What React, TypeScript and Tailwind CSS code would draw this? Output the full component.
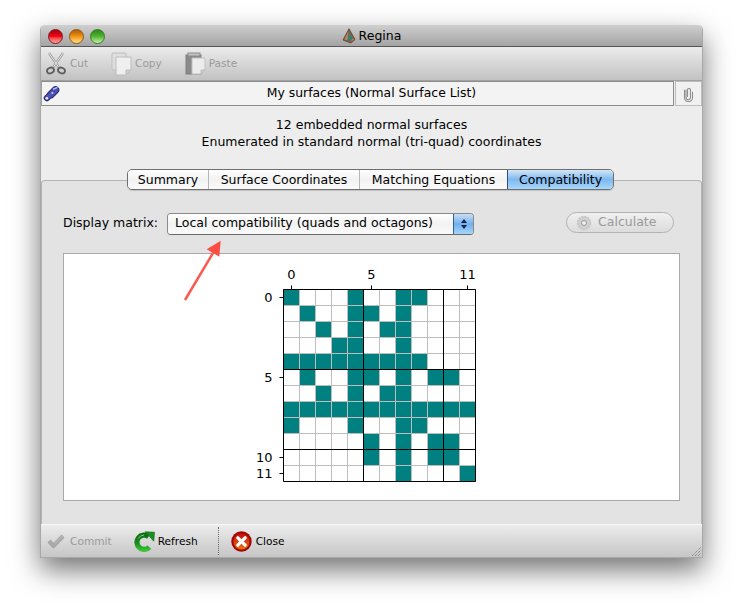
const F = '[font-family:"DejaVu_Sans",sans-serif]';
const rows: number[][] = [
  [0, 4, 7, 8],
  [1, 4, 5, 7],
  [2, 4, 6, 7],
  [3, 4, 7],
  [0, 1, 2, 3, 4, 5, 6, 7, 8],
  [1, 4, 5, 7, 9, 10],
  [2, 4, 6, 7],
  [0, 1, 2, 3, 4, 5, 6, 7, 8, 9, 10, 11],
  [0, 4, 7, 8],
  [5, 7, 9, 10],
  [5, 7, 9, 10],
  [7, 11],
];

function Matrix() {
  const ox = 40.5;
  const oy = 36.5;
  const c = 16;
  const idx = Array.from({ length: 13 }, (_, i) => i);
  return (
    <svg width="240" height="240" viewBox="0 0 240 240" className="block">
      <rect x={ox} y={oy} width={192} height={192} fill="#fff" />
      {rows.map((r, y) => r.map((x) => <rect key={`${x}-${y}`} x={ox + x * c} y={oy + y * c} width={c} height={c} fill="#008080" />))}
      {idx.map((i) => (
        <g key={i}>
          <line x1={ox + i * c} x2={ox + i * c} y1={oy} y2={oy + 192} stroke="#bdbdbd" />
          <line y1={oy + i * c} y2={oy + i * c} x1={ox} x2={ox + 192} stroke="#bdbdbd" />
        </g>
      ))}
      {[0, 5, 10, 12].map((i) => (
        <g key={i}>
          <line x1={ox + i * c} x2={ox + i * c} y1={oy} y2={oy + 192} stroke="#000" />
          <line y1={oy + i * c} y2={oy + i * c} x1={ox} x2={ox + 192} stroke="#000" />
        </g>
      ))}
      {([[0, "0"], [5, "5"], [11, "11"]] as [number, string][]).map(([i, t]) => (
        <g key={t}>
          <line x1={ox + 8 + i * c} x2={ox + 8 + i * c} y1={oy - 4} y2={oy} stroke="#000" />
          <text x={ox + 8 + i * c} y={oy - 11} textAnchor="middle" fontSize="13" fontFamily="DejaVu Sans" fill="#000">{t}</text>
        </g>
      ))}
      {([[0, "0"], [5, "5"], [10, "10"], [11, "11"]] as [number, string][]).map(([i, t]) => (
        <g key={t}>
          <line x1={ox - 4} x2={ox} y1={oy + 8 + i * c} y2={oy + 8 + i * c} stroke="#000" />
          <text x={ox - 11} y={oy + 12.5 + i * c} textAnchor="end" fontSize="13" fontFamily="DejaVu Sans" fill="#000">{t}</text>
        </g>
      ))}
    </svg>
  );
}

function Traffic({ cls }: { cls: string }) {
  return <span className={`w-[15px] h-[15px] rounded-full border bg-gradient-to-b ${cls}`} />;
}

function Scissors() {
  return (
    <svg width="24" height="24" viewBox="0 0 24 24" fill="none">
      <path d="M5 1 L14.5 15 M19 1 L9.5 15" stroke="#9c9c9c" strokeWidth="2.4" />
      <path d="M5 1 L14.5 15 M19 1 L9.5 15" stroke="#e6e6e6" strokeWidth="1" />
      <ellipse cx="6.5" cy="18.5" rx="3.6" ry="2.7" stroke="#5e5e5e" strokeWidth="1.8" transform="rotate(-25 6.5 18.5)" />
      <ellipse cx="17.5" cy="18.5" rx="3.6" ry="2.7" stroke="#5e5e5e" strokeWidth="1.8" transform="rotate(25 17.5 18.5)" />
    </svg>
  );
}

function CopyIcon() {
  return (
    <svg width="22" height="24" viewBox="0 0 22 24" fill="none">
      <rect x="1" y="1" width="14" height="17" rx="1" fill="#dedede" stroke="#bdbdbd" />
      <path d="M5 5 H20 V18 L15 23 H5 Z" fill="#efefef" stroke="#bcbcbc" />
      <path d="M20 18 H15 V23 Z" fill="#cfcfcf" stroke="#bcbcbc" />
    </svg>
  );
}

function PasteIcon() {
  return (
    <svg width="22" height="24" viewBox="0 0 22 24" fill="none">
      <rect x="1" y="3" width="15" height="19" fill="#8a8a8a" stroke="#7e7e7e" />
      <rect x="3" y="1" width="12" height="3" fill="#c4c4c4" stroke="#8a8a8a" />
      <path d="M7 6 H20 V18 L16 22 H7 Z" fill="#ececec" stroke="#c0c0c0" />
      <path d="M20 18 H16 V22 Z" fill="#cccccc" stroke="#bcbcbc" />
    </svg>
  );
}

function Wrench() {
  return (
    <svg width="17" height="17" viewBox="0 0 17 17" fill="none">
      <path d="M4 13 L8 9" stroke="#25256f" strokeWidth="6.4" strokeLinecap="round" />
      <path d="M8 9.5 L12.5 5" stroke="#25256f" strokeWidth="7.6" strokeLinecap="round" />
      <path d="M4 13 L8 9" stroke="#5358b8" strokeWidth="4.4" strokeLinecap="round" />
      <path d="M8 9.5 L12.5 5" stroke="#4b50b4" strokeWidth="5.6" strokeLinecap="round" />
      <path d="M10.5 4 L14 2.6" stroke="#b7bcf0" strokeWidth="1.4" strokeLinecap="round" />
      <circle cx="3.8" cy="13.2" r="1.3" fill="#f0f0f8" />
      <circle cx="9.4" cy="8" r="1" fill="#d4d6f2" />
    </svg>
  );
}

function Clip() {
  return (
    <svg width="11" height="16" viewBox="0 0 11 16" fill="none">
      <path d="M3 4 V11.5 A2.2 2.2 0 0 0 7.5 11.5 V3.5 A1.6 1.6 0 0 0 4.5 3.5 V10.5 M9.5 6 V12 A4 3.6 0 0 1 1.5 12 V4" stroke="#8f8f8f" strokeWidth="1.1" strokeLinecap="round" />
    </svg>
  );
}

function ReginaIcon() {
  return (
    <svg width="14" height="16" viewBox="0 0 14 16">
      <path d="M7 0.8 L13 11.5 L9 15 L1 12 Z" fill="#806048" stroke="#6a4c38" strokeLinejoin="round" />
      <path d="M7.5 4.5 L10 11.5 L6 12.5 Z" fill="#1f8a78" />
      <path d="M6.5 3 L2.5 11.5 L5.5 12 Z" fill="#b08a68" />
      <path d="M10.5 10 L12 11.5 L9 13.8 Z" fill="#b07a70" />
    </svg>
  );
}

function CheckIcon() {
  return (
    <svg width="20" height="16" viewBox="0 0 20 16" fill="none">
      <path d="M3 8 L7.5 13 L17 3" stroke="#a8a8a8" strokeWidth="4.2" strokeLinejoin="round" />
      <path d="M9 10.5 L16.5 3" stroke="#c4c4c4" strokeWidth="1" />
    </svg>
  );
}

function RefreshIcon() {
  return (
    <svg width="21" height="21" viewBox="0 0 21 21" fill="none">
      <defs>
        <linearGradient id="gr" gradientUnits="userSpaceOnUse" x1="0" y1="2" x2="0" y2="20">
          <stop offset="0" stopColor="#0f6a12" />
          <stop offset="0.55" stopColor="#1a8a1c" />
          <stop offset="1" stopColor="#3cc83a" />
        </linearGradient>
      </defs>
      <path d="M14.6 5.6 A7.2 7.2 0 1 0 15.4 16.2" stroke="url(#gr)" strokeWidth="5.2" />
      <path d="M11 0.8 L20.5 1.2 L19.8 10.2 Z" fill="#1c8f20" stroke="#0f6a12" strokeWidth="0.6" strokeLinejoin="round" />
      <path d="M4.2 7.5 A7 7 0 0 1 10 4" stroke="#7fd27a" strokeWidth="1" />
    </svg>
  );
}

function CloseIcon() {
  return (
    <svg width="21" height="21" viewBox="0 0 21 21">
      <defs>
        <linearGradient id="rd" x1="0" y1="0" x2="0" y2="1">
          <stop offset="0" stopColor="#c01010" />
          <stop offset="1" stopColor="#e8740c" />
        </linearGradient>
      </defs>
      <circle cx="10.5" cy="10.5" r="10.2" fill="#a40606" />
      <circle cx="10.5" cy="10.5" r="8" fill="url(#rd)" />
      <path d="M6.8 6.8 L14.2 14.2 M14.2 6.8 L6.8 14.2" stroke="#fff" strokeWidth="3.2" strokeLinecap="round" />
    </svg>
  );
}

function Tool({ icon, label, className }: { icon: React.ReactNode; label: string; className: string }) {
  return (
    <div className={`flex items-center ${className}`}>
      {icon}
      <span className="ml-[2px] pt-[1px] text-[10.5px] text-[#9a9a9a]">{label}</span>
    </div>
  );
}

function Tab({ label, active, className }: { label: string; active?: boolean; className: string }) {
  return (
    <div
      className={`flex items-center justify-center h-full pt-[1px] ${className} ${
        active
          ? "bg-gradient-to-b from-[#d4e6f8] via-[#7db8ee] to-[#a8d8fa] border-l border-[#2d4f86]"
          : "bg-gradient-to-b from-[#ffffff] via-[#f2f2f2] to-[#fbfbfb] border-l border-[#b8b8b8] first:border-l-0"
      }`}
    >
      <span className="text-[12.5px] text-black">{label}</span>
    </div>
  );
}

export default function App() {
  return (
    <div className={`w-[743px] h-[613px] bg-white pl-[40px] pt-[25px] overflow-hidden relative ${F}`}>
      <div className="w-[663px] h-[533px] flex flex-col rounded-t-[5px] bg-[#ededed] shadow-[0_12px_28px_rgba(0,0,0,0.55)] border-x border-b border-[#a8a8a8]">
        {/* title bar */}
        <div className="h-[22px] shrink-0 relative flex items-center justify-center rounded-t-[5px] bg-gradient-to-b from-[#cfcfcf] to-[#a4a4a4] border-b border-[#565656]">
          <div className="absolute left-[7px] top-[4px] flex gap-[6px]">
            <Traffic cls="border-[#7a1a20] from-[#a8000a] via-[#f00a1c] to-[#ffa0a4]" />
            <Traffic cls="border-[#8a5a1c] from-[#b05c08] via-[#f49410] to-[#ffe27a]" />
            <Traffic cls="border-[#3a7a2a] from-[#2a8a10] via-[#52b430] to-[#c8f2a4]" />
          </div>
          <div className="flex items-center gap-[3px] pt-[1px]">
            <ReginaIcon />
            <span className="text-[12.5px] text-black">Regina</span>
          </div>
        </div>
        {/* toolbar */}
        <div className="h-[34px] shrink-0 flex items-center bg-gradient-to-b from-[#ececec] to-[#c2c2c2] border-b border-[#a0a0a0]">
          <Tool icon={<Scissors />} label="Cut" className="ml-[3px]" />
          <Tool icon={<CopyIcon />} label="Copy" className="ml-[23px]" />
          <Tool icon={<PasteIcon />} label="Paste" className="ml-[23px]" />
        </div>
        {/* header */}
        <div className="h-[25px] shrink-0 flex items-stretch">
          <div className="flex-1 flex items-center relative bg-[#f3f3f3] border border-[#8c8c8c] border-l-[#a0a0a0] pl-[28px]">
            <span className="absolute left-[1px] top-[3px]"><Wrench /></span>
            <span className="w-full text-center text-[12.4px] text-black">My surfaces (Normal Surface List)</span>
          </div>
          <div className="w-[27px] ml-[1px] flex items-center justify-center bg-[#f1f1f1] border border-[#bdbdbd]">
            <Clip />
          </div>
        </div>
        {/* description */}
        <div className="h-[63px] shrink-0 flex flex-col items-center pt-[10px] text-[12.5px] leading-[17px] text-black">
          <span>12 embedded normal surfaces</span>
          <span>Enumerated in standard normal (tri-quad) coordinates</span>
        </div>
        {/* pane */}
        <div className="h-[344px] shrink-0 relative bg-[#e3e3e3] border border-[#b4b4b4] border-b-0 rounded-t-[4px] mt-[11px] flex flex-col">
          <div className="absolute left-[85px] top-[-12px] w-[487px] h-[21px] flex rounded-[5px] overflow-hidden border border-[#6f6f6f] shadow-[0_1px_1px_rgba(0,0,0,0.15)]">
            <Tab label="Summary" className="w-[80px]" />
            <Tab label="Surface Coordinates" className="w-[151px]" />
            <Tab label="Matching Equations" className="w-[148px]" />
            <Tab label="Compatibility" active className="flex-1" />
          </div>
          <div className="flex items-center pt-[31px] pl-[21px]">
            <span className="text-[12.5px] text-black">Display matrix:</span>
            <div className="ml-[9px] w-[307px] h-[22px] flex rounded-[4px] overflow-hidden border border-[#8a8a8a] border-b-[#6a6a6a]">
              <div className="flex-1 flex items-center pl-[7px] bg-gradient-to-b from-[#ffffff] via-[#f2f2f2] to-[#fafafa] text-[12.5px] text-black whitespace-nowrap">
                Local compatibility (quads and octagons)
              </div>
              <div className="w-[20px] flex flex-col items-center justify-center gap-[2px] bg-gradient-to-b from-[#c9dff5] via-[#6fb0ee] to-[#a5d6fb] border-l border-[#3b5c90]">
                <span className="w-0 h-0 border-x-[3px] border-x-transparent border-b-[4px] border-b-[#14204a]" />
                <span className="w-0 h-0 border-x-[3px] border-x-transparent border-t-[4px] border-t-[#14204a]" />
              </div>
            </div>
            <div className="ml-[92px] mb-[2px] w-[108px] h-[21px] flex items-center rounded-full border border-[#b4b4b4] bg-gradient-to-b from-[#f0f0f0] to-[#dcdcdc]">
              <svg width="16" height="16" viewBox="0 0 16 16" className="ml-[9px]">
                <circle cx="8" cy="8" r="6.5" fill="#d0d0d0" stroke="#c4c4c4" strokeWidth="1.5" strokeDasharray="2 1" />
                <circle cx="8" cy="8" r="2.5" fill="#efefef" stroke="#9a9a9a" />
              </svg>
              <span className="ml-[6px] text-[12.5px] text-[#9a9a9a]">Calculate</span>
            </div>
          </div>
          <div className="ml-[21px] mt-[18px] w-[617px] h-[248px] bg-white border border-[#a9a9a9] flex justify-center">
            <div className="ml-[-18px] mt-[-1px]"><Matrix /></div>
          </div>
        </div>
        {/* bottom bar */}
        <div className="flex-1 flex items-center bg-gradient-to-b from-[#ececec] to-[#c6c6c6] border-t border-[#f8f8f8] relative">
          <div className="flex items-center ml-[5px] gap-[4px]">
            <CheckIcon />
            <span className="pt-[2px] text-[10.6px] text-[#9a9a9a]">Commit</span>
          </div>
          <div className="flex items-center ml-[22px] gap-[3px]">
            <RefreshIcon />
            <span className="pt-[2px] text-[10.6px] text-black">Refresh</span>
          </div>
          <div className="ml-[20px] self-stretch my-[2px] border-l border-dotted border-[#666]" />
          <div className="flex items-center ml-[12px] gap-[4px]">
            <CloseIcon />
            <span className="pt-[2px] text-[10.6px] text-black">Close</span>
          </div>
          <svg width="11" height="11" viewBox="0 0 11 11" className="absolute right-0 bottom-0">
            <path d="M1 10 L10 1 M4 10 L10 4 M7 10 L10 7" stroke="#777" strokeDasharray="1 1" />
          </svg>
        </div>
      </div>
      {/* annotation arrow */}
      <svg width="50" height="70" viewBox="0 0 50 70" className="absolute left-[178px] top-[236px]">
        <path d="M7 64 L35 17" stroke="#fb5a50" strokeWidth="2.5" />
        <path d="M42.7 4.7 L28.7 13.3 L41.3 20.7 Z" fill="#fb4d44" />
      </svg>
    </div>
  );
}
